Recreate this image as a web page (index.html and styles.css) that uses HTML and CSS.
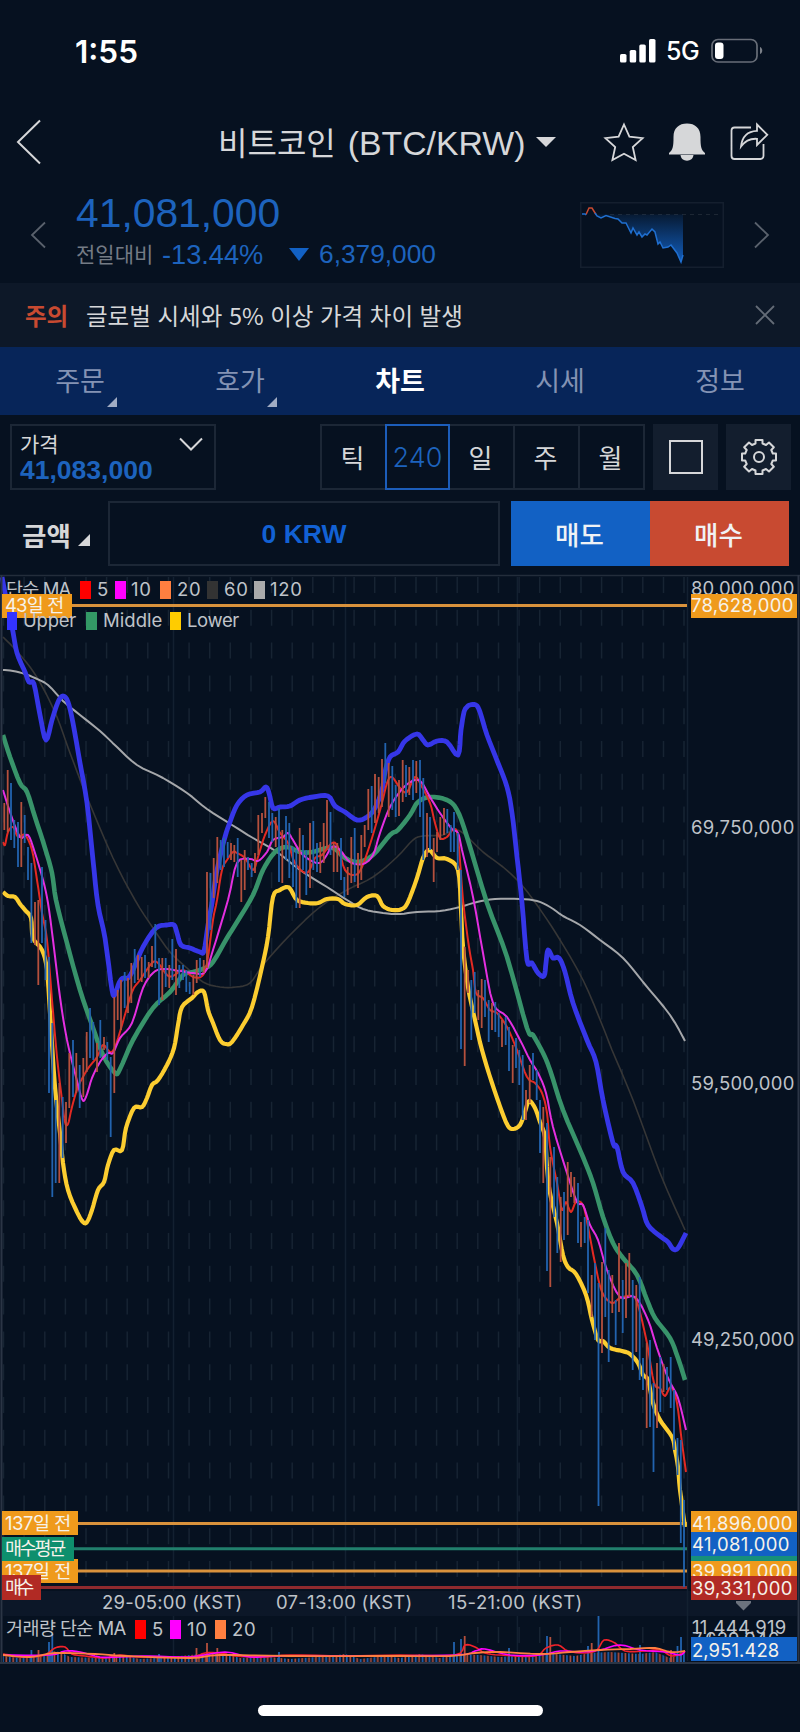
FILE: index.html
```html
<!DOCTYPE html>
<html lang="ko">

<head>
    <meta charset="UTF-8">
    <meta name="viewport" content="width=device-width, initial-scale=1.0">
    <title>비트코인 (BTC/KRW)</title>
    <link rel="stylesheet" href="styles.css">
</head>

<body>
    <div class="status-bar">
        <span class="clock">1:55</span>
        <div class="status-icons">
            <svg class="signal" width="36" height="24" viewBox="0 0 36 24" fill="#fff">
                <rect x="0" y="15" width="6.5" height="8.5" rx="1.6" />
                <rect x="9.7" y="11" width="6.5" height="12.5" rx="1.6" />
                <rect x="19.3" y="5.5" width="6.5" height="18" rx="1.6" />
                <rect x="29" y="0" width="6.5" height="23.5" rx="1.6" />
            </svg>
            <span class="network">5G</span>
            <svg class="battery" width="53" height="26" viewBox="0 0 53 26">
                <rect x="1" y="1.5" width="45" height="22.5" rx="6" fill="none" stroke="#686e78" stroke-width="1.7" />
                <rect x="4" y="4.5" width="8.5" height="16.5" rx="3" fill="#fff" />
                <path d="M49 9c3 1 3 6 0 7z" fill="#7b8088" />
            </svg>
        </div>
    </div>

    <header>
        <svg class="back" width="26" height="46" viewBox="0 0 26 46"><path d="M24 1.500 2 23l22 21.500" /></svg>
        <h1><span class="coin">비트코인</span> <span class="pair">(BTC/KRW)</span></h1>
        <i class="caret"></i>
        <div class="header-icons">
            <svg width="40" height="38" viewBox="0 0 40 38"><path d="M20 1.500l5.400 12.200 13.200 1.400-9.800 8.900 2.800 13L20 30.700 8.400 37l2.800-13-9.800-8.900 13.200-1.400z" /></svg>
            <svg class="solid" width="38" height="38" viewBox="0 0 38 38"><path d="M1 30c4-3 4.500-7 4.500-16C5.500 5 11 .500 19 .500S32.500 5 32.500 14c0 9 .5 13 4.500 16v1.500H1zM12.500 32h13c-.5 3.700-3 5.700-6.500 5.700s-6-2-6.500-5.700z" /></svg>
            <svg width="38" height="38" viewBox="0 0 38 38"><path d="M21 4.500H4.500q-3 0-3 3V33q0 3 3 3h26q3 0 3-3V21M27 1.500l10.300 10.300L27 22v-6.200c-7-.5-12 2.200-16 7.700 1-9 6-15.300 16-15.700z" /></svg>
        </div>
    </header>

    <section class="summary">
        <svg class="arrow" width="16" height="28" viewBox="0 0 16 28"><path d="M15 1.500 2 14l13 12.500" /></svg>
        <div class="quote">
            <div class="price">41,081,000</div>
            <div class="change">
                <span class="change-label">전일대비</span>
                <span class="percent">-13.44%</span>
                <i class="down"></i>
                <span>6,379,000</span>
            </div>
        </div>
        <svg class="sparkline" width="144" height="66" viewBox="0 0 144 66">
            <defs>
                <linearGradient id="fall" x1="0" y1="0" x2="0" y2="1">
                    <stop offset="0" stop-color="#1261c4" stop-opacity=".12" />
                    <stop offset="1" stop-color="#1261c4" stop-opacity=".95" />
                </linearGradient>
            </defs>
            <rect x=".75" y=".75" width="142.500" height="64.500" fill="none" stroke="#141f2e" stroke-width="1.500" />
            <path d="M30 12.500H138" stroke="#1d2734" stroke-dasharray="4 4" />
            <path d="M16 12.500 20 16 25 13.500 37 17 42 21 46 21 51 31 53 26 57 33 59 30 62 35 65 32 67 33 72 27 75 30 78 42 80 40 83 46 88 45 91 43 97 51 101 60 103 53V12.500z" fill="url(#fall)" />
            <path d="M6 12.500 9 6h3l4 6.500" fill="none" stroke="#c84a31" stroke-width="1.500" />
            <path d="M2 12h3l1 1M15 11l2 3 4 2 5-2.500 9 3 3 .500 4 4h4l5 10 2-5 4 7 2-3 3 5 3-3 2 1 5-6 3 3 3 12 2-2 3 6 5-1 3-2 6 8 4 9 2-7" fill="none" stroke="#1f6fd0" stroke-width="1.500" />
        </svg>
        <svg class="arrow" width="16" height="28" viewBox="0 0 16 28"><path d="M1 1.500 14 14 1 26.500" /></svg>
    </section>

    <div class="notice">
        <strong>주의</strong>
        <span class="notice-text">글로벌 시세와 5% 이상 가격 차이 발생</span>
        <svg width="20" height="20" viewBox="0 0 20 20"><path d="M1 1l18 18M19 1 1 19" /></svg>
    </div>

    <nav>
        <a class="more">주문</a>
        <a class="more">호가</a>
        <a class="active">차트</a>
        <a>시세</a>
        <a>정보</a>
    </nav>

    <div class="toolbar">
        <div class="price-box">
            <div class="price-box-label">가격</div>
            <div class="price-box-value">41,083,000</div>
            <svg width="24" height="14" viewBox="0 0 24 14"><path d="M1 1.500l11 11 11-11" /></svg>
        </div>
        <div class="periods">
            <span>틱</span>
            <span class="selected">240</span>
            <span>일</span>
            <span>주</span>
            <span>월</span>
        </div>
        <button class="tool"><i class="square"></i></button>
        <button class="tool">
            <svg width="36" height="36" viewBox="0 0 36 36">
                <circle cx="18" cy="18" r="5" />
                <path d="M14.500 1h7v3.500l3.500 1.500 3-2.500 4.800 4.800L30.300 11l1.500 3.500H35v7h-3.200L30.300 25l2.500 2.700-4.800 4.800-3-2.500-3.500 1.500V35h-7v-3.500L11 30l-3 2.500-4.800-4.800L5.700 25l-1.500-3.500H1v-7h3.200L5.700 11 3.200 8.300 8 3.500 11 6l3.500-1.500z" stroke-linejoin="round" />
            </svg>
        </button>
    </div>

    <div class="order-row">
        <div class="amount-label">금액</div>
        <div class="amount">0 KRW</div>
        <button class="sell">매도</button>
        <button class="buy">매수</button>
    </div>

    <svg class="chart" width="800" height="1089" viewBox="0 575 800 1089">
        <defs>
            <pattern id="bars" x="2" width="6.880" height="10" patternUnits="userSpaceOnUse">
                <rect width="1.700" height="10" fill="#1f63b4" />
                <rect x="3.440" width="1.700" height="10" fill="#b5503d" />
            </pattern>
        </defs>

        <!-- time axis and grid -->
        <rect x="3" y="1591" width="794" height="25" fill="#0c1728" />
        <path class="grid-dash" d="M3.500 577V1590M24.100 577V1590M44.800 577V1590M65.400 577V1590M86 577V1590M106.600 577V1590M127.200 577V1590M147.800 577V1590M168.500 577V1590M189.100 577V1590M209.700 577V1590M230.300 577V1590M251 577V1590M271.600 577V1590M292.200 577V1590M312.800 577V1590M333.500 577V1590M354.100 577V1590M374.700 577V1590M395.300 577V1590M416 577V1590M436.600 577V1590M457.200 577V1590M477.800 577V1590M498.500 577V1590M519.100 577V1590M539.700 577V1590M560.300 577V1590M581 577V1590M601.600 577V1590M622.200 577V1590M642.800 577V1590M663.500 577V1590M684 577V1590" />
        <path class="grid-dash" d="M271.600 1627v17M292.200 1627v17M312.800 1627v17M333.500 1627v17M354.100 1627v17M374.700 1627v17M395.300 1627v17M416 1627v17M436.600 1627v17M477.800 1627v17M498.500 1627v17M519.100 1627v17M539.700 1627v17M560.300 1627v17M581 1627v17M622.200 1627v17M642.800 1627v17M663.500 1627v17" />
        <path class="grid" d="M173.500 577V1591M345.500 577V1591M517.400 577V1591M687.500 577V1661M173.500 1616v46M345.500 1616v46M517.400 1616v46" />

        <!-- level lines -->
        <path d="M3 605.500H687" stroke="#d9923c" stroke-width="3" />
        <path d="M3 1523.500H687M3 1571H687" stroke="#d9923c" stroke-width="3" />
        <path d="M3 1548.700H687" stroke="#217f6c" stroke-width="3" />
        <path d="M3 1587.500H687" stroke="#8f2a2e" stroke-width="3" />

        <!-- moving averages and bands -->
        <polyline class="line ma60" points="3,637 13,647 30,667 43,688 57,717 70,753 87,797 113,858 135,900 153,928 170,952 187,968 203,982 220,987 236,987 250,983 263,965 290,935 320,907 347,890 373,877 397,857 413,840 423,836 443,835 453,830 463,833 483,852 503,867 520,883 537,905 557,935 583,980 603,1027 612,1050 633,1100 660,1173 685,1230" />
        <polyline class="line ma120" points="3,670 13,671 25,674 35,678 48,685 63,701 80,715 100,731 117,747 137,765 163,778 187,793 207,809 232,825 253,838 277,852 300,870 327,887 347,900 363,909 383,913 400,914 417,912 440,911 460,907 477,902 495,899 520,899 537,901 550,907 563,916 580,925 600,940 623,958 643,982 670,1015 685,1041" />
        <polyline class="line upper" points="2,577 7,603 13,632 17,653 25,672 29,682 34,684 40,715 46,740 52,720 58,702 63,696 68,702 73,723 80,763 87,803 93,860 98,905 105,938 112,990 115,994 119,983 123,978 128,978 133,970 143,947 156,928 167,925 174,925 177,933 181,945 190,948 200,952 204,951 208,925 212,903 217,870 225,837 230,822 237,805 247,795 260,792 266,787 269,793 273,808 280,807 290,806 300,800 313,797 328,796 335,806 345,812 357,820 367,817 375,808 382,790 385,772 390,757 398,752 405,741 417,734 423,740 428,745 437,741 447,742 458,755 461,730 464,712 467,707 470,705 476,705 480,712 487,735 498,763 507,787 512,813 517,857 522,903 527,960 532,963 538,973 544,976 546,963 548,950 553,958 559,958 565,972 573,1003 587,1040 596,1062 603,1100 613,1143 617,1147 623,1172 633,1183 642,1207 648,1225 660,1236 668,1242 673,1249 678,1248 686,1233" />
        <polyline class="line middle" points="3,735 10,757 20,783 27,792 35,817 45,848 52,873 56,900 67,943 80,990 92,1025 103,1055 115,1073 120,1069 133,1040 153,1008 170,992 183,975 193,972 205,968 213,962 227,938 237,922 253,895 263,870 275,852 287,847 300,852 312,852 327,848 335,849 345,858 358,862 373,855 390,835 398,830 410,815 418,802 430,797 447,800 457,810 467,837 487,903 507,957 527,1028 533,1035 543,1053 550,1070 563,1110 583,1157 593,1183 603,1217 613,1243 623,1258 637,1275 647,1300 655,1318 670,1338 678,1358 685,1380" />
        <polyline class="line lower" points="3,892 8,896 15,897 20,904 25,910 31,918 33,938 42,950 47,970 50,1013 55,1087 60,1133 63,1163 68,1190 77,1212 83,1222 87,1222 92,1210 98,1190 104,1182 108,1165 114,1150 122,1150 126,1128 134,1108 142,1107 147,1098 152,1085 158,1080 167,1065 174,1048 178,1025 182,1007 192,998 198,992 204,992 208,1010 213,1023 220,1040 226,1044 232,1042 243,1025 252,1007 262,967 268,937 273,897 280,890 287,887 291,890 297,900 308,903 318,903 327,899 338,899 345,904 357,905 367,897 377,896 383,906 392,910 402,909 408,902 417,878 423,858 429,850 437,858 447,859 458,870 461,910 463,947 468,987 475,1020 482,1050 492,1083 502,1112 508,1126 513,1129 520,1125 525,1112 529,1101 535,1108 540,1122 545,1137 547,1167 550,1193 557,1223 563,1255 568,1267 576,1274 586,1295 592,1320 598,1340 603,1341 610,1348 622,1351 630,1354 638,1363 643,1375 648,1380 653,1403 660,1420 672,1437 675,1450 678,1467 680,1490 685,1527" />
        <polyline class="line ma5" points="3,842 5,845 8,832 13,827 18,837 25,835 32,850 37,880 42,913 47,940 52,1000 57,1057 62,1100 65,1122 68,1124 72,1107 78,1087 87,1070 97,1057 103,1045 110,1052 115,1047 122,1025 132,992 140,980 152,963 158,963 167,975 173,976 183,970 193,977 202,976 207,963 213,920 217,900 222,870 227,860 233,852 237,853 245,858 253,870 258,857 265,835 273,821 280,833 288,843 295,863 307,873 315,858 322,855 332,843 338,847 345,870 355,875 362,867 372,838 382,803 387,783 392,777 400,788 407,792 415,777 422,787 430,803 435,823 440,838 447,837 453,830 458,837 463,900 469,947 473,970 476,993 483,998 490,1010 497,1013 507,1027 517,1050 527,1077 535,1083 542,1093 547,1113 550,1147 557,1183 562,1210 566,1202 571,1212 576,1202 583,1205 588,1227 595,1263 602,1292 612,1303 620,1298 632,1296 638,1305 647,1343 654,1383 660,1388 665,1396 671,1387 677,1403 682,1443 686,1472" />
        <polyline class="line ma10" points="3,790 10,812 20,837 28,835 35,853 43,880 48,903 53,940 60,997 67,1040 75,1073 82,1099 86,1097 92,1078 100,1062 108,1053 113,1053 120,1038 132,1023 143,988 153,973 163,969 180,971 193,973 205,972 213,950 228,900 237,863 250,859 258,861 267,852 273,840 283,837 288,833 293,840 303,855 320,863 332,847 340,850 350,862 363,864 373,855 380,833 390,807 403,788 415,780 422,783 430,797 440,813 452,829 458,833 462,850 473,897 483,953 493,1003 507,1017 520,1040 530,1060 538,1073 546,1093 553,1127 567,1173 577,1202 583,1205 590,1225 598,1240 607,1270 620,1297 635,1297 648,1320 657,1348 668,1378 678,1398 686,1430" />

        <!-- candles -->
        <path class="wick fall" d="M11 783V840M14.300 820V848M18 822V867M24.700 815V843M28 847V880M31.400 863V943M42 867V943M45.500 920V980M49 957V1093M52.300 1023V1197M55.700 1100V1183M62.700 1097V1158M73 1040V1097M79.700 1065V1108M90 1008V1058M93.300 1022V1060M100.300 1020V1058M107.300 1042V1060M110.700 1057V1137M124.700 972V1008M134.700 949V983M145 955V978M155.300 924V968M159 958V1005M165.700 958V987M172.300 939V980M179.300 965V988M183 965V980M186.300 970V992M189.700 982V994M200 958V977M210.500 873V930M220.700 840V870M224 838V867M227.700 842V858M237.700 838V877M248 857V870M251.700 863V877M269 802V838M272.300 813V842M279 808V882M286 816V860M289.300 823V878M293 847V887M296.300 850V908M303 835V870M306.300 850V895M313.300 821V870M317 843V872M330.500 812V855M341 838V880M344.300 877V897M354.700 828V882M371.700 786V833M385.300 743V783M392.300 766V810M395.700 785V817M406 765V797M413 760V800M420 760V817M423.300 778V860M430 817V850M447.300 809V833M450.700 825V852M454 812V852M457.700 833V870M461 870V1049M471.300 980V1040M474.700 972V1013M485 980V1017M488.700 1000V1042M495.300 1002V1032M498.700 1013V1037M505.700 1017V1045M509 1027V1071M516 1038V1068M519.300 1050V1085M522.700 1055V1120M533 1053V1080M536.700 1070V1100M540 1100V1153M547 1123V1271M554 1147V1217M557.300 1177V1253M564 1192V1240M578 1183V1243M584.700 1217V1243M588 1220V1293M595 1263V1340M598.500 1283V1506M605.300 1228V1317M608.700 1270V1362M615.700 1300V1345M622.700 1280V1333M632.700 1280V1370M639.700 1277V1380M643 1358V1390M650 1340V1427M653.500 1383V1472M660.300 1357V1412M667 1367V1390M670.700 1357V1408M674 1390V1450M677.500 1438V1475M680.800 1440V1543M684 1500V1587" />
        <path class="wick rise" d="M4.300 803V830M7.700 770V832M21.300 802V867M35 902V945M38.300 900V985M59.300 1083V1183M66 1102V1143M69.300 1053V1108M76.300 1053V1093M83.300 1058V1097M86.700 1032V1072M97 1043V1072M104 1037V1050M114.300 997V1093M117.700 990V1020M121 980V1030M128 978V1013M131.300 963V1003M138 955V980M141.700 957V982M148.700 962V978M152 946V967M162.300 958V1000M169.300 965V988M176 949V995M193.300 975V995M196.700 960V983M203.700 960V973M207 872V968M213.700 858V898M217.300 837V883M231 843V860M234.300 845V862M241.300 860V902M244.700 850V890M255 853V873M258.300 815V855M262 813V833M265.300 797V818M275.700 817V847M282.300 830V883M299.700 828V908M310 823V888M320.300 842V873M323.700 823V863M327 800V848M333.700 843V872M337.300 843V872M347.700 867V895M351.300 837V883M358 853V888M361.300 835V880M364.700 825V847M368.300 789V830M375 774V823M378.700 777V813M382 759V807M388.700 763V817M399 780V816M402.700 760V802M409.300 767V795M416.300 761V793M427 813V857M433.700 838V882M437 832V852M440.300 817V840M444 808V835M464.700 947V1066M468 970V993M478.300 990V1020M481.700 979V1028M492 1003V1030M502 1020V1047M512.700 1045V1083M526 1090V1120M529.700 1065V1103M543.300 1107V1183M550.300 1157V1287M560.700 1197V1262M567.700 1162V1235M571 1172V1197M574.300 1177V1203M581 1222V1247M591.700 1275V1317M602 1262V1353M612.300 1275V1313M619 1243V1312M626 1263V1318M629.300 1253V1297M636.300 1285V1352M646.700 1343V1428M657 1363V1428M663.500 1364V1392" />

        <!-- volume -->
        <path fill="url(#bars)" d="M3 1662V1656L20 1658 28 1655 40 1657 50 1651 60 1652 70 1657 100 1658 120 1655 140 1659 170 1657 200 1654 225 1653 240 1658 270 1657 290 1659 330 1656 345 1654 360 1659 385 1656 400 1658 420 1654 440 1658 455 1654 480 1655 500 1657 530 1655 545 1653 575 1656 590 1653 610 1652 640 1654 655 1652 670 1658 685 1652V1662z" />
        <path class="wick fall" d="M31.400 1650v12M49 1642v20M52.300 1634v28M159 1654v8M279 1652v10M454 1642v20M461 1639v23M547 1636v26M509 1648v14M588 1646v16M598.500 1616v46M640 1645v17M677.500 1646v16M681 1637v25" />
        <path class="wick rise" d="M38.500 1650v12M114.300 1653v9M196.500 1648v14M207 1643v19M217.300 1648v14M464.700 1636v26M550.300 1637v25M591.700 1643v19M671 1650v12" />
        <polyline class="line vol5" points="3,1654 15,1656 28,1657 45,1655 55,1648 65,1647 72,1654 85,1656 105,1658 120,1655 140,1657 190,1657 205,1653 220,1653 235,1656 265,1657 290,1655 345,1656 400,1655 455,1655 465,1645 475,1647 485,1653 500,1655 535,1656 546,1648 558,1645 568,1651 585,1653 597,1650 604,1640 615,1643 625,1651 645,1651 660,1650 672,1656 685,1652" />
        <polyline class="line vol10" points="3,1655 50,1655 65,1651 80,1652 100,1657 120,1657 150,1656 190,1657 225,1652 250,1657 280,1656 345,1656 455,1655 475,1651 485,1649 510,1655 540,1655 560,1651 580,1652 600,1650 620,1645 640,1650 665,1652 680,1655 685,1651" />
        <polyline class="line vol20" points="3,1655 30,1657 55,1653 95,1654 125,1656 190,1658 220,1655 290,1656 400,1656 450,1656 475,1653 500,1652 540,1654 570,1652 600,1650 630,1649 655,1648 670,1652 685,1651" />

        <!-- frame -->
        <path d="M0 575.500H800" stroke="#232d3b" stroke-width="1.500" />
        <path d="M1.500 575V1663M798.500 575V1663" stroke="#2b3545" stroke-width="2" />
        <path d="M0 1663H800" stroke="#2b3545" stroke-width="2" />

        <!-- price axis -->
        <text x="691" y="595" textLength="104">80,000,000</text>
        <text x="691" y="834" textLength="104">69,750,000</text>
        <text x="691" y="1090" textLength="104">59,500,000</text>
        <text x="691" y="1346" textLength="104">49,250,000</text>

        <!-- legend under the tags -->
        <text x="6" y="596" textLength="66">단순 MA</text>
        <rect x="80" y="581" width="11" height="18" fill="#f00" />
        <text x="97" y="596">5</text>
        <rect x="115" y="581" width="11" height="18" fill="#f0f" />
        <text x="131" y="596">10</text>
        <rect x="160" y="581" width="11" height="18" fill="#ff7f40" />
        <text x="177" y="596">20</text>
        <rect x="207" y="581" width="11" height="18" fill="#333" />
        <text x="224" y="596">60</text>
        <rect x="254" y="581" width="11" height="18" fill="#aaa" />
        <text x="270" y="596">120</text>

        <!-- tags -->
        <g class="tag">
            <rect x="2" y="594" width="70" height="24" fill="#ef9a1c" />
            <text x="5" y="612" textLength="60">43일 전</text>
            <rect x="691" y="594" width="106" height="24" fill="#ef9a1c" />
            <text x="691" y="612" textLength="103">78,628,000</text>
            <rect x="2" y="1511" width="76" height="24" fill="#ef9a1c" />
            <text x="5" y="1530" textLength="67">137일 전</text>
            <rect x="691" y="1511" width="106" height="24" fill="#ef9a1c" />
            <text x="692" y="1530" textLength="101">41,896,000</text>
            <rect x="2" y="1559" width="76" height="24" fill="#ef9a1c" />
            <text x="5" y="1578" textLength="67">137일 전</text>
            <rect x="2" y="1537" width="72" height="24" fill="#0e8f6d" />
            <text x="5" y="1555" textLength="62">매수평균</text>
            <rect x="691" y="1545" width="106" height="20" fill="#16907a" />
            <rect x="691" y="1561" width="106" height="24" fill="#ef9a1c" />
            <text x="692" y="1578" textLength="101">39,991,000</text>
            <rect x="691" y="1532" width="106" height="24" fill="#1261c4" />
            <text x="692" y="1551" textLength="98">41,081,000</text>
            <rect x="2" y="1575" width="39" height="25" fill="#b12a24" />
            <text x="5" y="1594" textLength="30">매수</text>
            <rect x="691" y="1576" width="106" height="24" fill="#b12a24" />
            <text x="692" y="1595" textLength="101">39,331,000</text>
        </g>

        <rect x="7" y="612" width="10" height="18" fill="#33f" />
        <text x="23" y="627" textLength="54">Upper</text>
        <rect x="86" y="612" width="11" height="18" fill="#339966" />
        <text x="103" y="627" textLength="60">Middle</text>
        <rect x="170" y="612" width="11" height="18" fill="#fc0" />
        <text x="187" y="627" textLength="53">Lower</text>

        <text x="102" y="1609" textLength="141">29-05:00 (KST)</text>
        <text x="276" y="1609" textLength="137">07-13:00 (KST)</text>
        <text x="448" y="1609" textLength="135">15-21:00 (KST)</text>
        <path d="M736 1601h15v2l-7.500 7.500-7.500-7.500z" fill="#6c737e" />

        <!-- volume legend and axis -->
        <text x="6" y="1635" textLength="121">거래량 단순 MA</text>
        <rect x="135" y="1620" width="11" height="19" fill="#f00" />
        <text x="152" y="1636">5</text>
        <rect x="170" y="1620" width="11" height="19" fill="#f0f" />
        <text x="187" y="1636">10</text>
        <rect x="215" y="1620" width="11" height="19" fill="#ff7f40" />
        <text x="232" y="1636">20</text>
        <text x="692" y="1634" textLength="95">11,444.919</text>
        <text x="692" y="1646" textLength="88">7,629.946</text>
        <g class="tag">
            <rect x="691" y="1637" width="106" height="24" fill="#1261c4" />
            <text x="692" y="1657" textLength="88">2,951.428</text>
        </g>
    </svg>

    <div class="home-indicator"></div>

    <script>
        // round off the indicator lines
        document.querySelectorAll('polyline.line').forEach(line => {
            const p = line.getAttribute('points').trim().split(' ').map(s => s.split(',').map(Number));
            const out = [];
            for (let i = 0; i < p.length - 1; i++) {
                const a = p[i - 1] || p[i], b = p[i], c = p[i + 1], d = p[i + 2] || c;
                for (let t = 0; t < 1; t += 0.25) {
                    out.push([0, 1].map(k => (0.5 * (2 * b[k] + (c[k] - a[k]) * t
                        + (2 * a[k] - 5 * b[k] + 4 * c[k] - d[k]) * t * t
                        + (3 * b[k] - a[k] - 3 * c[k] + d[k]) * t * t * t)).toFixed(1)).join(','));
                }
            }
            out.push(p[p.length - 1].join(','));
            line.setAttribute('points', out.join(' '));
        });
    </script>
</body>

</html>
```
FILE: styles.css
```css
* {
    box-sizing: border-box;
}

body {
    margin: 0;
    width: 800px;
    height: 1732px;
    overflow: hidden;
    background-color: #061120;
    color: #d6d7d9;
    font-family: "Liberation Sans", "Noto Sans CJK KR", sans-serif;
}

svg {
    display: block;
    flex: none;
    overflow: visible;
}

button {
    border: none;
    padding: 0;
    font-family: inherit;
    color: inherit;
}

/* status bar */
.status-bar {
    display: flex;
    justify-content: space-between;
    align-items: center;
    height: 102px;
    padding: 0 36px 0 75px;
    color: #fff;
    font-family: Inter, sans-serif;
    font-weight: 600;
}

.clock {
    font-size: 31.5px;
}

.status-icons {
    display: flex;
    align-items: center;
}

.network {
    width: 45px;
    padding-left: 10px;
    font-size: 25px;
    font-weight: 500;
    letter-spacing: -0.5px;
}

.battery {
    margin-left: 10px;
}

/* header */
header {
    display: flex;
    align-items: center;
    height: 80px;
    padding: 0 32px 0 16px;
}

.back {
    fill: none;
    stroke: #d6d7d9;
    stroke-width: 2;
}

h1 {
    display: flex;
    align-items: baseline;
    gap: 12px;
    width: 307px;
    margin: 0 0 2px 176px;
    font-weight: normal;
    white-space: nowrap;
}

.coin {
    font-size: 32px;
}

.pair {
    font-size: 33.8px;
}

.caret {
    margin-left: 11px;
    border: 10px solid transparent;
    border-top-color: #d6d7d9;
    border-bottom: 0;
}

.header-icons {
    display: flex;
    gap: 24px;
    margin-left: auto;
    fill: none;
    stroke: #d6d7d9;
    stroke-width: 1.8;
}

.header-icons .solid {
    fill: #d6d7d9;
    stroke: none;
}

/* price summary */
.summary {
    display: flex;
    align-items: center;
    height: 101px;
    padding: 0 30px 0 30px;
}

.arrow {
    margin-top: 5px;
    fill: none;
    stroke: #59616c;
    stroke-width: 1.8;
}

.quote {
    flex: 1;
    margin-left: 30px;
    color: #1d63bd;
}

.price {
    margin-top: -3px;
    font-size: 40.8px;
    line-height: 46px;
}

.change {
    display: flex;
    align-items: center;
    height: 36px;
    padding-top: 1px;
    font-size: 26.3px;
}

.change-label {
    width: 86px;
    margin-top: -4px;
    color: #747b85;
    font-size: 21px;
}

.percent {
    width: 127px;
    font-size: 27.2px;
}

.down {
    margin-right: 10px;
    border: 10px solid transparent;
    border-top: 13px solid #1261c4;
    border-bottom: 0;
}

.sparkline {
    margin: 5px 30px 0 0;
}

/* notice */
.notice {
    display: flex;
    align-items: center;
    height: 64px;
    padding: 5px 25px 0;
    background-color: #0d1828;
    font-family: "Noto Sans CJK KR", sans-serif;
    font-size: 23.5px;
}

.notice strong {
    width: 61px;
    margin-top: -5px;
    color: #c84a31;
}

.notice-text {
    flex: 1;
    margin-top: -5px;
    white-space: nowrap;
}

.notice svg {
    margin-bottom: 6px;
    stroke: #646c77;
    stroke-width: 1.8;
}

/* tabs */
nav {
    display: grid;
    grid-template-columns: repeat(5, 1fr);
    height: 68px;
    background-color: #072559;
}

nav a {
    position: relative;
    text-align: center;
    font-size: 27px;
    line-height: 70px;
    color: #8493b4;
}

nav .active {
    color: #fff;
    font-weight: bold;
}

.more::after {
    content: "";
    position: absolute;
    right: 43px;
    bottom: 10px;
    border-left: 10px solid transparent;
    border-bottom: 10px solid #a1acc3;
}

/* chart toolbar */
.toolbar {
    display: flex;
    height: 86px;
    padding: 9px 9px 11px 10px;
}

.price-box {
    position: relative;
    width: 206px;
    border: 2px solid #1c2736;
    padding: 5px 0 0 8px;
}

.price-box-label {
    font-size: 21px;
    line-height: 27px;
}

.price-box-value {
    font-size: 26.5px;
    font-weight: bold;
    line-height: 24px;
    color: #1d63bd;
}

.price-box svg {
    position: absolute;
    right: 11px;
    top: 11px;
    fill: none;
    stroke: #d6d7d9;
    stroke-width: 2;
}

.periods {
    display: flex;
    width: 325px;
    margin: 0 8px 0 104px;
    border: 2px solid #1c2736;
}

.periods span {
    flex: 1;
    border-left: 2px solid #1c2736;
    padding-right: 2px;
    text-align: center;
    font-family: "Noto Sans CJK KR", sans-serif;
    font-size: 26px;
    line-height: 61px;
}

.periods span:first-child,
.periods .selected + span {
    border-left: none;
}

.periods .selected {
    margin: -2px 0;
    padding: 0;
    flex-basis: 3px;
    border: 2px solid #1c5dba;
    color: #1d63bd;
    font-family: Inter, sans-serif;
    font-size: 27px;
    font-weight: 300;
    line-height: 64px;
}

.tool {
    display: flex;
    align-items: center;
    justify-content: center;
    width: 65px;
    margin-right: 8px;
    background-color: #131e2e;
}

.tool:last-child {
    margin-right: 0;
}

.tool svg {
    fill: none;
    stroke: #d6d7d9;
    stroke-width: 2;
}

.square {
    width: 34px;
    height: 34px;
    border: 2px solid #d6d7d9;
}

/* order row */
.order-row {
    display: flex;
    height: 74px;
    padding: 0 10px 9px 22px;
    font-size: 26.5px;
    font-weight: bold;
    line-height: 65px;
}

.amount-label {
    width: 86px;
    line-height: 73px;
}

.amount-label::after {
    content: "";
    display: inline-block;
    margin-left: 7px;
    border-left: 12px solid transparent;
    border-bottom: 12px solid #d6d7d9;
}

.amount {
    width: 392px;
    margin-right: 11px;
    border: 2px solid #1c2736;
    text-align: center;
    line-height: 63px;
    color: #1261d4;
}

.sell,
.buy {
    width: 139px;
    padding-right: 2px;
    font-size: 26.5px;
    font-weight: 500;
    color: #f0f2f5;
}

.sell {
    background-color: #1261c4;
}

.buy {
    background-color: #c84a31;
}

/* chart */
.chart text {
    font-family: Inter, "Noto Sans CJK KR", sans-serif;
    font-size: 18.5px;
    letter-spacing: 0.7px;
    fill: #bfc3c9;
}

.chart .tag text {
    fill: #f6f2ea;
}

.grid {
    stroke: #132030;
    stroke-width: 1.5;
}

.grid-dash {
    stroke: #172433;
    stroke-width: 1.5;
    stroke-dasharray: 16 16.8;
}

.line {
    fill: none;
    stroke-linejoin: round;
}

.upper {
    stroke: #3636e8;
    stroke-width: 4.8;
}

.middle {
    stroke: #38936a;
    stroke-width: 4.6;
}

.lower {
    stroke: #fccd30;
    stroke-width: 4.2;
}

.ma5 {
    stroke: #e32a23;
    stroke-width: 2;
}

.ma10 {
    stroke: #e42fe0;
    stroke-width: 2;
}

.ma60 {
    stroke: #363636;
    stroke-width: 1.6;
}

.ma120 {
    stroke: #a5a7aa;
    stroke-width: 2;
}

.wick {
    stroke-width: 1.8;
}

.fall {
    stroke: #2263ae;
}

.rise {
    stroke: #b5503d;
}

.vol5 {
    stroke: #f4222a;
    stroke-width: 1.6;
}

.vol10 {
    stroke: #f0f;
    stroke-width: 1.6;
}

.vol20 {
    stroke: #ff7f40;
    stroke-width: 1.8;
}

.home-indicator {
    width: 285px;
    height: 11px;
    margin: 41px auto 0;
    border-radius: 6px;
    background-color: #fff;
}
```
